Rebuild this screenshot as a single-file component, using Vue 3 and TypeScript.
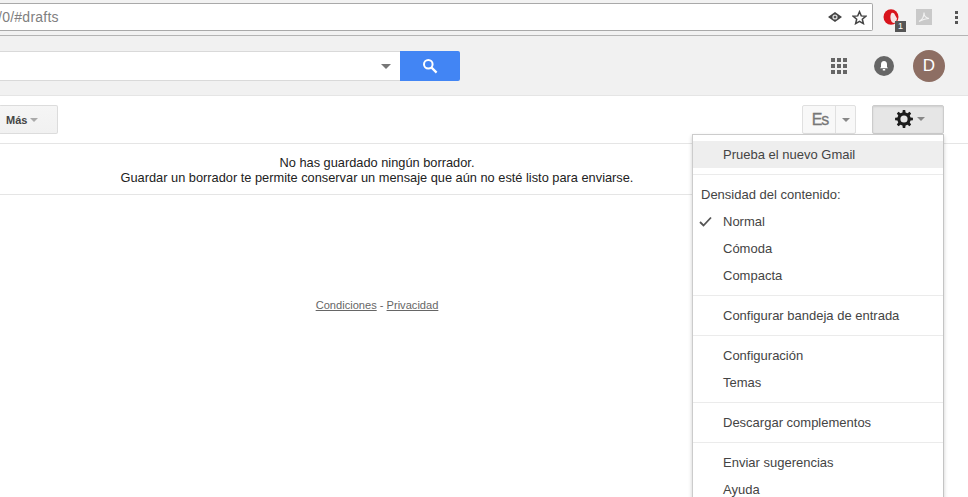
<script setup lang="ts">
const menuGroups: { label?: string; items: { text: string; checked?: boolean; hover?: boolean }[] }[] = [
  { items: [{ text: 'Prueba el nuevo Gmail', hover: true }] },
  { label: 'Densidad del contenido:', items: [{ text: 'Normal', checked: true }, { text: 'Cómoda' }, { text: 'Compacta' }] },
  { items: [{ text: 'Configurar bandeja de entrada' }] },
  { items: [{ text: 'Configuración' }, { text: 'Temas' }] },
  { items: [{ text: 'Descargar complementos' }] },
  { items: [{ text: 'Enviar sugerencias' }, { text: 'Ayuda' }] },
]

function gearPath(teeth: number, outer: number, root: number, hole: number): string {
  const pts: string[] = []
  const step = (Math.PI * 2) / teeth
  for (let i = 0; i < teeth; i++) {
    const a = i * step - Math.PI / 2
    const corners: [number, number][] = [
      [root, a - step * 0.3],
      [outer, a - step * 0.17],
      [outer, a + step * 0.17],
      [root, a + step * 0.3],
    ]
    for (const [r, t] of corners) {
      pts.push(`${(12 + r * Math.cos(t)).toFixed(2)} ${(12 + r * Math.sin(t)).toFixed(2)}`)
    }
  }
  return `M${pts.join('L')}Z M12 ${12 - hole}a${hole} ${hole} 0 1 0 0 ${hole * 2}a${hole} ${hole} 0 1 0 0 ${-hole * 2}Z`
}
const gear = gearPath(8, 12, 9, 4.8)
</script>

<template>
  <div class="page">
    <header class="chrome">
      <div class="url">
        <span class="url-text">/0/#drafts</span>
        <svg class="eye" width="14" height="10" viewBox="0 0 14 10"><path d="M7 0 14 5 7 10 0 5Z" fill="#444"/><circle cx="7" cy="5" r="2.600" fill="#ddd"/><circle cx="7" cy="5" r="1.300" fill="#555"/></svg>
        <svg class="star" width="15" height="15" viewBox="0 0 24 24"><path d="M12 2.800 14.800 9.400 22 10 16.500 14.700 18.200 21.700 12 18 5.800 21.700 7.500 14.700 2 10 9.200 9.400Z" fill="none" stroke="#444" stroke-width="2.400"/></svg>
      </div>
      <div class="ext opera">
        <svg width="17" height="16" viewBox="0 0 17 16"><ellipse cx="8" cy="8" rx="7.500" ry="7.800" fill="#d8141c"/><path d="M8.500 4c1.500-.5 3 .5 3.500 2l2 3.500-1 3.500c-2 1.500-3.500 1-4.500-.5C7 10 7 6 8.500 4Z" fill="#f6e4e4"/></svg>
        <span class="badge">1</span>
      </div>
      <div class="ext pdf">
        <svg width="16" height="16" viewBox="0 0 16 16"><rect width="16" height="16" fill="#c9c9c9"/><path d="M3 12.500c3-1.500 5-5.500 5-9 0 3 2 5.500 5 6-3 0-6 1-10 3Z" fill="none" stroke="#f2f2f2" stroke-width="1.100"/></svg>
      </div>
      <div class="kebab"><i></i><i></i><i></i></div>
    </header>

    <section class="gbar">
      <div class="search">
        <div class="search-input"><span class="caret big"></span></div>
        <button class="search-btn">
          <svg width="16" height="16" viewBox="0 0 16 16"><circle cx="6.300" cy="6.300" r="4.300" fill="none" stroke="#fff" stroke-width="2"/><path d="m9.600 9.600 5 5" stroke="#fff" stroke-width="2.200"/></svg>
        </button>
      </div>
      <div class="gbar-right">
        <svg class="apps" width="16" height="16" viewBox="0 0 16 16" fill="#666"><rect x="0" y="0" width="4" height="4"/><rect x="6" y="0" width="4" height="4"/><rect x="12" y="0" width="4" height="4"/><rect x="0" y="6" width="4" height="4"/><rect x="6" y="6" width="4" height="4"/><rect x="12" y="6" width="4" height="4"/><rect x="0" y="12" width="4" height="4"/><rect x="6" y="12" width="4" height="4"/><rect x="12" y="12" width="4" height="4"/></svg>
        <svg class="bell" width="20" height="20" viewBox="0 0 20 20"><circle cx="10" cy="10" r="10" fill="#666"/><path d="M10 5c2 0 3 1.500 3 3.500v2.500l1 1.300H6l1-1.300V8.500C7 6.500 8 5 10 5Z" fill="#fff"/><rect x="8.800" y="13" width="2.400" height="1.500" fill="#fff"/></svg>
        <div class="avatar">D</div>
      </div>
    </section>

    <section class="toolbar">
      <button class="btn mas">Más<span class="caret"></span></button>
      <div class="lang">
        <span class="lang-main">Es</span>
        <span class="lang-drop"><span class="caret"></span></span>
      </div>
      <button class="btn gear">
        <svg width="18" height="18" viewBox="0 0 24 24"><path fill="#1c1c1c" fill-rule="evenodd" :d="gear"/></svg>
        <span class="caret"></span>
      </button>
    </section>

    <main class="content">
      <div class="empty">
        <div>No has guardado ningún borrador.</div>
        <div>Guardar un borrador te permite conservar un mensaje que aún no esté listo para enviarse.</div>
      </div>
      <div class="legal"><a>Condiciones</a> - <a>Privacidad</a></div>
    </main>

    <nav class="menu">
      <div v-for="(group, i) in menuGroups" :key="i" class="group">
        <div v-if="group.label" class="label">{{ group.label }}</div>
        <div v-for="item in group.items" :key="item.text" class="item" :class="{ hover: item.hover }">
          <svg v-if="item.checked" class="check" width="13" height="11" viewBox="0 0 13 11"><path d="M1 6l3.500 3.500L12 1.500" fill="none" stroke="#555" stroke-width="1.800"/></svg>
          {{ item.text }}
        </div>
      </div>
    </nav>
  </div>
</template>

<style>
html, body { margin: 0; overflow: hidden; background: #fff; }
</style>

<style scoped>
.page { position: relative; width: 968px; height: 497px; overflow: hidden; font-family: Arial, "Liberation Sans", sans-serif; font-size: 12px; color: #222; }
.chrome { box-sizing: border-box; height: 36px; background: #f2f2f2; border-bottom: 1px solid #b4b4b4; display: flex; align-items: flex-start; padding-top: 3px; }
.url { box-sizing: border-box; width: 874px; height: 28px; margin-left: -1px; background: #fff; border: 1px solid #a9a9a9; border-left: 0; border-radius: 0 2px 2px 0; display: flex; align-items: center; padding-right: 5px; }
.url-text { font-size: 14px; letter-spacing: .25px; color: #808080; margin-left: -1px; margin-right: auto; }
.eye { margin-right: 10px; }
.ext { position: relative; flex: none; }
.opera { margin: 6px 0 0 10px; width: 23px; height: 24px; }
.badge { position: absolute; left: 12px; top: 12px; width: 11px; height: 11px; background: #555; color: #fff; font-size: 9px; line-height: 11px; text-align: center; }
.pdf { margin: 6px 0 0 10px; height: 16px; }
.kebab { margin: 8px 0 0 23px; display: flex; flex-direction: column; gap: 2px; }
.kebab i { width: 3px; height: 3px; background: #555; display: block; }

.gbar { box-sizing: border-box; height: 60px; padding-top: 1px; background: #f1f1f1; border-bottom: 1px solid #e5e5e5; display: flex; align-items: center; }
.search { display: flex; height: 30px; }
.search-input { box-sizing: border-box; width: 400px; background: #fff; border: 1px solid #d9d9d9; border-left: 0; border-right: 0; position: relative; }
.search-input .caret { position: absolute; right: 9px; top: 12px; }
.search-btn { width: 60px; height: 30px; padding: 0; border: 0; border-radius: 0 2px 2px 0; background: #4285f4; display: flex; align-items: center; justify-content: center; }
.gbar-right { margin-left: auto; display: flex; align-items: center; margin-right: 23px; }
.apps { margin-right: 27px; }
.bell { margin-right: 19px; }
.avatar { width: 32px; height: 32px; border-radius: 50%; background: #8d6e63; color: #fff; font-size: 17px; line-height: 32px; text-align: center; }

.toolbar { box-sizing: border-box; height: 48px; border-bottom: 1px solid #e5e5e5; display: flex; align-items: flex-start; padding-top: 9px; }
.btn { box-sizing: border-box; height: 29px; border: 1px solid #dcdcdc; border-radius: 2px; background: linear-gradient(#f5f5f5, #f1f1f1); font: inherit; padding: 0; display: flex; align-items: center; }
.mas { width: 59px; margin-left: -1px; border-left: 0; justify-content: flex-start; padding-left: 7px; font-size: 11px; font-weight: bold; color: #444; }
.mas .caret { margin-left: 3px; border-top-color: #aaa; }
.caret { display: inline-block; width: 0; height: 0; border: 4px solid transparent; border-bottom: 0; border-top-color: #888; }
.big { border-width: 5px 5px 0; border-top-color: #777; }
.lang { margin-left: auto; display: flex; height: 29px; box-sizing: border-box; border: 1px solid #e0e0e0; border-radius: 2px; background: #f8f8f8; }
.lang-main { box-sizing: border-box; width: 33px; padding-left: 2px; text-align: center; line-height: 27px; font-size: 16px; letter-spacing: -1.200px; color: #777; -webkit-text-stroke: .3px #777; border-right: 1px solid #e0e0e0; }
.lang-drop { width: 19px; display: flex; align-items: center; justify-content: center; }
.gear { width: 72px; margin: 0 24px 0 16px; padding: 0 0 2px 3px; justify-content: center; gap: 4px; background: #e6e6e6; border-color: #ccc; box-shadow: inset 0 1px 2px rgba(0,0,0,.1); }

.content { text-align: center; width: 754px; }
.empty { box-sizing: border-box; height: 51px; border-bottom: 1px solid #e5e5e5; padding-top: 11px; font-size: 12.800px; line-height: 15px; color: #222; }
.legal { margin-top: 104px; font-size: 11.100px; color: #666; }
.legal a { text-decoration: underline; }

.menu { position: absolute; left: 692px; top: 134px; box-sizing: border-box; width: 252px; height: 380px; background: #fff; border: 1px solid #ccc; border-right-color: #c4c4c4; padding-top: 6px; box-shadow: 0 2px 4px rgba(0,0,0,.2); font-size: 13px; color: #444; }
.group { border-bottom: 1px solid #ebebeb; padding-bottom: 6px; margin-bottom: 6px; }
.group:last-child { border-bottom: 0; }
.item, .label { position: relative; height: 27px; line-height: 27px; padding-left: 30px; white-space: nowrap; }
.label { padding-left: 8px; }
.item.hover { background: #eee; }
.check { position: absolute; left: 6px; top: 8px; }
</style>
